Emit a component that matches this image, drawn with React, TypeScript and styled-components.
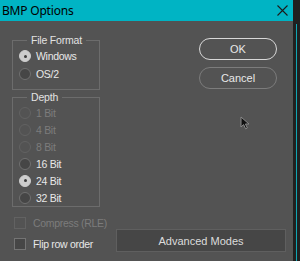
import React from 'react';
import styled, { createGlobalStyle } from 'styled-components';

const GlobalStyle = createGlobalStyle`
  html, body {
    margin: 0;
    padding: 0;
    background: #1e1e1e;
  }
  * {
    box-sizing: border-box;
  }
`;

const depthOptions = [
  { label: '1 Bit', disabled: true, checked: false },
  { label: '4 Bit', disabled: true, checked: false },
  { label: '8 Bit', disabled: true, checked: false },
  { label: '16 Bit', disabled: false, checked: false },
  { label: '24 Bit', disabled: false, checked: true },
  { label: '32 Bit', disabled: false, checked: false },
];

const App: React.FC = () => {
  return (
    <>
      <GlobalStyle />
      <Screen>
        <Dialog>
          <TitleBar>
            <Title>BMP Options</Title>
            <CloseButton>
              <svg width="11" height="11" viewBox="0 0 11 11">
                <path d="M0.5 0.5 L10.5 10.5 M10.5 0.5 L0.5 10.5" stroke="#1b1b1b" strokeWidth="1.1" />
              </svg>
            </CloseButton>
          </TitleBar>
          <Body>
            <LeftColumn>
              <Group>
                <Legend>File Format</Legend>
                <Radio checked>Windows</Radio>
                <Radio>OS/2</Radio>
              </Group>
              <Group $depth>
                <Legend>Depth</Legend>
                {depthOptions.map(opt => (
                  <Radio key={opt.label} checked={opt.checked} disabled={opt.disabled} $row={17}>
                    {opt.label}
                  </Radio>
                ))}
              </Group>
              <Checks>
                <Check disabled>Compress (RLE)</Check>
                <Check>Flip row order</Check>
              </Checks>
            </LeftColumn>
            <RightColumn>
              <PillButton $primary>OK</PillButton>
              <PillButton>Cancel</PillButton>
              <WideButton>Advanced Modes</WideButton>
            </RightColumn>
          </Body>
          <Cursor width="12" height="14" viewBox="0 0 12 14">
            <path d="M1 1 L1 11 L3.6 8.6 L5.6 12.8 L7.4 12 L5.4 8 L9 8 Z" fill="#111" stroke="#8a8a8a" strokeWidth="1" />
          </Cursor>
        </Dialog>
        <Edge />
      </Screen>
    </>
  );
};

const Radio: React.FC<{ checked?: boolean; disabled?: boolean; $row?: number; children: React.ReactNode }> = ({
  checked,
  disabled,
  $row = 18,
  children,
}) => (
  <OptionRow $row={$row} $disabled={disabled}>
    <RadioDot $checked={checked} $disabled={disabled} />
    {children}
  </OptionRow>
);

const Check: React.FC<{ disabled?: boolean; children: React.ReactNode }> = ({ disabled, children }) => (
  <OptionRow $row={14} $disabled={disabled}>
    <CheckBox $disabled={disabled} />
    {children}
  </OptionRow>
);

// Styled components
const Screen = styled.div`
  width: 300px;
  height: 261px;
  display: flex;
  overflow: hidden;
  font-family: 'Liberation Sans', Arial, sans-serif;
`;

const Dialog = styled.div`
  position: relative;
  width: 293px;
  height: 261px;
  background: #535353;
  display: flex;
  flex-direction: column;
`;

const Edge = styled.div`
  flex: 1;
  background: #202020;
  padding-top: 24px;
  padding-left: 3px;

  &::after {
    content: '';
    display: block;
    width: 1px;
    height: 100%;
    background: #0fa6b4;
  }
`;

const TitleBar = styled.div`
  height: 21px;
  background: #00b4c4;
  display: flex;
  align-items: center;
  justify-content: space-between;
  padding: 0 0 0 2px;
`;

const Title = styled.span`
  font-family: 'Noto Sans', 'Open Sans', sans-serif;
  font-size: 12px;
  color: #000;
  letter-spacing: -0.2px;
`;

const CloseButton = styled.span`
  width: 22px;
  height: 21px;
  display: flex;
  align-items: center;
  justify-content: center;
`;

const Body = styled.div`
  flex: 1;
  display: flex;
  padding: 0 7px 9px 12px;
  gap: 16px;
`;

const LeftColumn = styled.div`
  width: 88px;
  display: flex;
  flex-direction: column;
  padding-top: 12px;
`;

const Group = styled.fieldset<{ $depth?: boolean }>`
  margin: 0;
  border: 1px solid #6c6c6c;
  padding: 0 0 ${p => (p.$depth ? '0' : '6px')} 6px;
  min-width: 0;
`;

const Legend = styled.legend`
  font-size: 10.5px;
  line-height: 14px;
  color: #e2e2e2;
  padding: 0 4px;
  margin-left: 8px;
  letter-spacing: -0.2px;
`;

const OptionRow = styled.div<{ $row: number; $disabled?: boolean }>`
  height: ${p => p.$row}px;
  display: flex;
  align-items: center;
  gap: 5px;
  font-size: 10.5px;
  letter-spacing: -0.3px;
  white-space: nowrap;
  color: ${p => (p.$disabled ? '#7c7c7c' : '#e8e8e8')};
`;

const RadioDot = styled.span<{ $checked?: boolean; $disabled?: boolean }>`
  width: 12px;
  height: 12px;
  border-radius: 50%;
  flex-shrink: 0;
  display: flex;
  align-items: center;
  justify-content: center;
  background: ${p => (p.$checked ? '#cdcdcd' : p.$disabled ? '#535353' : '#464646')};
  border: 1px solid ${p => (p.$checked ? '#cdcdcd' : p.$disabled ? '#626262' : '#707070')};

  &::after {
    content: '';
    width: 3px;
    height: 3px;
    border-radius: 50%;
    background: #3c3c3c;
    display: ${p => (p.$checked ? 'block' : 'none')};
  }
`;

const Checks = styled.div`
  display: flex;
  flex-direction: column;
  gap: 7px;
  margin-top: 9px;
  padding-left: 2px;
`;

const CheckBox = styled.span<{ $disabled?: boolean }>`
  width: 12px;
  height: 12px;
  flex-shrink: 0;
  background: ${p => (p.$disabled ? '#535353' : '#464646')};
  border: 1px solid ${p => (p.$disabled ? '#626262' : '#747474')};
  margin-right: 2px;
`;

const RightColumn = styled.div`
  flex: 1;
  display: flex;
  flex-direction: column;
  align-items: flex-end;
  padding-top: 17px;
`;

const PillButton = styled.button<{ $primary?: boolean }>`
  width: 78px;
  height: 22px;
  margin: 0 9px 7px 0;
  border-radius: 11px;
  background: #535353;
  border: ${p => (p.$primary ? '1.5px solid #d8d8d8' : '1px solid #7c7c7c')};
  color: #e8e8e8;
  font-family: 'Liberation Sans', Arial, sans-serif;
  font-size: 11px;
  padding: 0;
`;

const WideButton = styled.button`
  margin-top: auto;
  width: 170px;
  height: 23px;
  background: #464646;
  border: 1px solid #5f5f5f;
  color: #dcdcdc;
  font-family: 'Liberation Sans', Arial, sans-serif;
  font-size: 11px;
  padding: 0;
`;

const Cursor = styled.svg`
  position: absolute;
  left: 240px;
  top: 116px;
`;

export default App;
